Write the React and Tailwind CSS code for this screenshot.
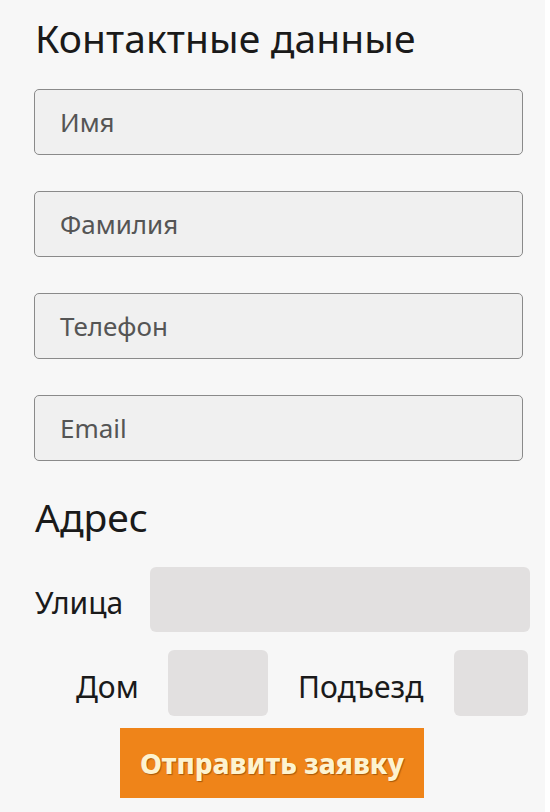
export default function App() {
  const fields = ["Имя", "Фамилия", "Телефон", "Email"];
  return (
    <div className="bg-white w-[550px] h-[812px]" style={{ fontFamily: '"Noto Sans", sans-serif' }}>
      <div className="w-[545px] h-[812px] bg-[#f7f7f7] pl-[34px] pt-[14px]">
        <h1 className="text-[39px] leading-[48px] text-[#1a1a1a] pl-[1px] tracking-[0.1px]">Контактные данные</h1>
        <div className="flex flex-col gap-[36px] mt-[27px] w-[489px]">
          {fields.map((f) => (
            <div key={f} className="h-[66px] rounded-[5px] border border-[#8a8a8a] bg-[#f0f0f0] flex items-center pl-[25px] text-[26px] text-[#555]">
              {f}
            </div>
          ))}
        </div>
        <h2 className="text-[39px] leading-[48px] text-[#1a1a1a] mt-[32px] pl-[1px]">Адрес</h2>
        <div className="flex items-center mt-[26px]">
          <span className="text-[30px] text-[#1a1a1a] w-[116px] pl-[1px] pt-[6px]">Улица</span>
          <div className="w-[380px] h-[65px] rounded-[6px] bg-[#e2e0e0]"></div>
        </div>
        <div className="flex items-center mt-[18px]">
          <span className="text-[30px] text-[#1a1a1a] ml-[42px] w-[92px] pt-[6px]">Дом</span>
          <div className="w-[100px] h-[66px] rounded-[6px] bg-[#e2e0e0]"></div>
          <span className="text-[30px] text-[#1a1a1a] ml-[30px] w-[156px] pt-[6px]">Подъезд</span>
          <div className="w-[74px] h-[66px] rounded-[6px] bg-[#e2e0e0]"></div>
        </div>
        <button className="mt-[12px] ml-[86px] w-[304px] h-[70px] bg-[#ef8419] text-[#fdf3d0] text-[28px] font-extrabold flex items-center justify-center" style={{ textShadow: "1px 1px 1px rgba(120,60,0,0.6)" }}>
          Отправить заявку
        </button>
      </div>
    </div>
  );
}
